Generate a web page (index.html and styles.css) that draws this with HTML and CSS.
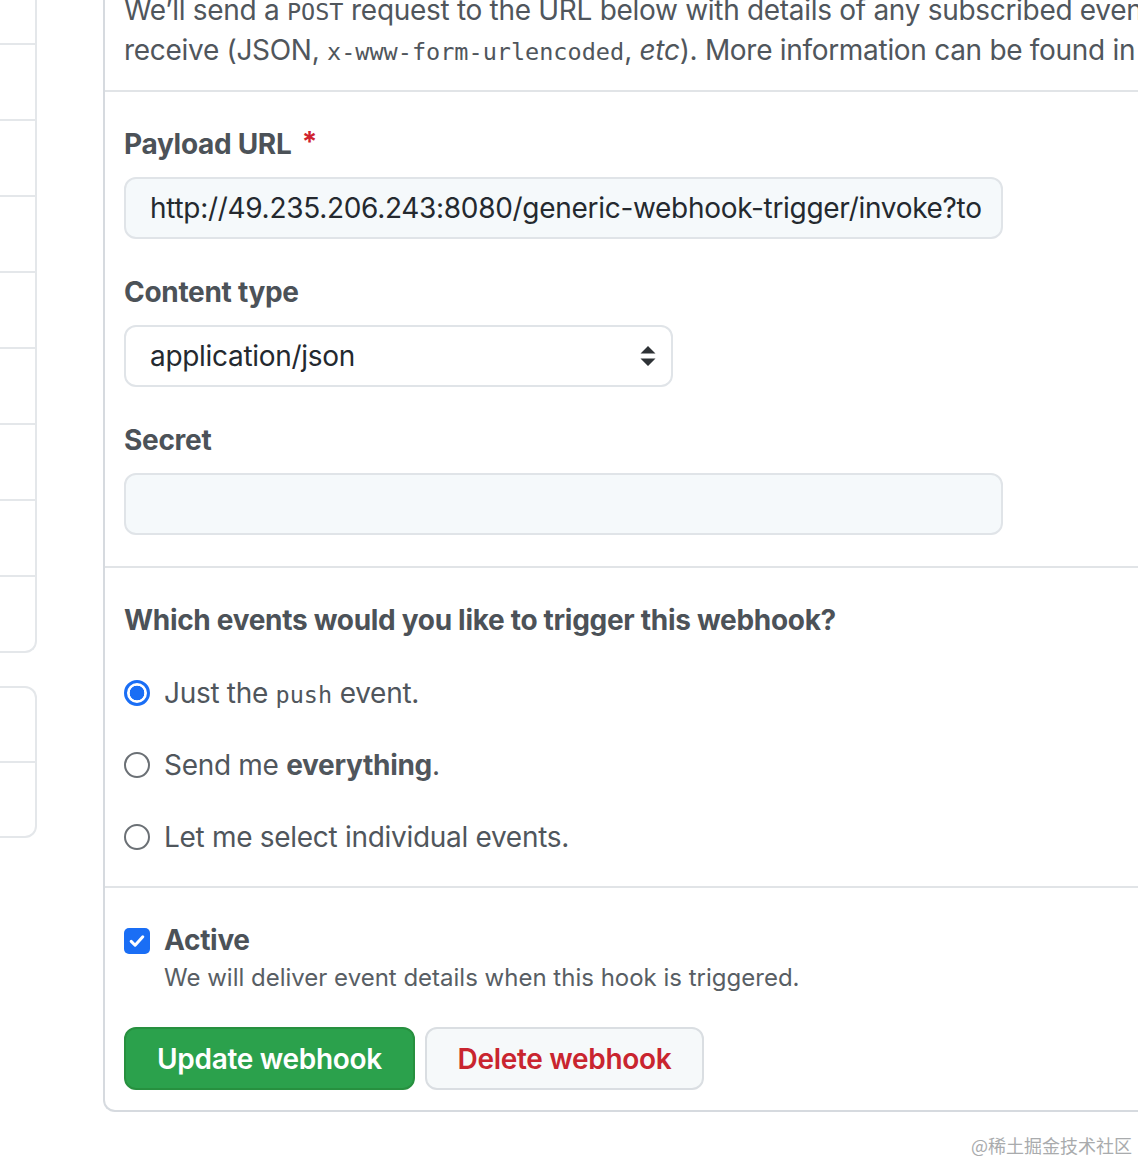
FILE: index.html
```html
<!DOCTYPE html>
<html lang="en">
<head>
<meta charset="utf-8">
<title>Webhooks / Manage webhook</title>
<link rel="stylesheet" href="styles.css">
</head>
<body>
<div class="page">
  <aside class="sidebar">
    <nav class="menu menu-main">
      <div class="menu-item menu-item-partial"></div>
      <div class="menu-item"></div>
      <div class="menu-item"></div>
      <div class="menu-item"></div>
      <div class="menu-item"></div>
      <div class="menu-item"></div>
      <div class="menu-item"></div>
      <div class="menu-item"></div>
      <div class="menu-item"></div>
    </nav>
    <nav class="menu menu-second">
      <div class="menu-item"></div>
      <div class="menu-item"></div>
    </nav>
  </aside>

  <main class="panel">
    <section class="section intro">
      <p class="intro-text">We’ll send a <code>POST</code> request to the URL below with details of any subscribed events. You can also specify which data format you’d like to<br>receive (JSON, <code>x-www-form-urlencoded</code>, <em>etc</em>). More information can be found in our developer documentation.</p>
    </section>

    <section class="section fields">
      <div class="field">
        <label class="label" for="url">Payload URL <span class="required">*</span></label>
        <div class="input input-wide"><span class="input-value">http://49.235.206.243:8080/generic-webhook-trigger/invoke?to</span></div>
      </div>
      <div class="field">
        <label class="label" for="ctype">Content type</label>
        <div class="select">
          <span class="input-value">application/json</span>
          <svg class="select-arrows" width="16" height="22" viewBox="0 0 16 22"><path d="M8 1 L15.5 8.5 H0.5 Z M8 21 L15.5 13.5 H0.5 Z" fill="#2e3236"/></svg>
        </div>
      </div>
      <div class="field">
        <label class="label" for="secret">Secret</label>
        <div class="input input-wide"></div>
      </div>
    </section>

    <section class="section events">
      <h3 class="heading">Which events would you like to trigger this webhook?</h3>
      <div class="option">
        <span class="radio radio-checked"></span>
        <span class="option-text">Just the <code class="code-inline">push</code> event.</span>
      </div>
      <div class="option">
        <span class="radio"></span>
        <span class="option-text">Send me <strong>everything</strong>.</span>
      </div>
      <div class="option">
        <span class="radio"></span>
        <span class="option-text">Let me select individual events.</span>
      </div>
    </section>

    <section class="section active">
      <div class="check-row">
        <span class="checkbox">
          <svg width="18" height="18" viewBox="0 0 18 18"><path d="M3.2 9.4 L7.1 13.2 L14.8 4.8" fill="none" stroke="#fff" stroke-width="3" stroke-linecap="round" stroke-linejoin="round"/></svg>
        </span>
        <div class="check-body">
          <div class="check-label">Active</div>
          <p class="note">We will deliver event details when this hook is triggered.</p>
        </div>
      </div>
      <div class="actions">
        <button class="btn btn-primary" type="button">Update webhook</button>
        <button class="btn btn-danger" type="button">Delete webhook</button>
      </div>
    </section>
  </main>
</div>
<div class="watermark">@稀土掘金技术社区</div>
</body>
</html>
```

FILE: styles.css
```css
html, body {
  margin: 0;
  padding: 0;
  overflow: hidden;
  background: #ffffff;
}

body {
  width: 1138px;
  height: 1164px;
  position: relative;
  font-family: Inter, "Noto Sans", sans-serif;
  color: #50565c;
  letter-spacing: -0.3px;
}

.page {
  display: flex;
  align-items: flex-start;
  width: 1400px;
}

/* sidebar */
.sidebar {
  width: 37px;
  flex: none;
  display: flex;
  flex-direction: column;
}

.menu {
  border: 2px solid #e4e7ea;
  border-left: none;
  box-sizing: border-box;
  width: 37px;
}

.menu-main {
  border-top: none;
  border-bottom-right-radius: 12px;
}

.menu-second {
  margin-top: 33px;
  border-top-right-radius: 12px;
  border-bottom-right-radius: 12px;
}

.menu-item {
  height: 74px;
  border-top: 2px solid #e4e7ea;
}

.menu-second .menu-item {
  height: 73px;
}

.menu-item:first-child {
  border-top: none;
}

.menu-main .menu-item-partial {
  height: 43px;
}

/* panel */
.panel {
  margin-left: 66px;
  width: 1200px;
  flex: none;
  border-left: 2px solid #d6dadf;
  border-bottom: 2px solid #d6dadf;
  border-bottom-left-radius: 12px;
}

.section {
  padding-left: 19px;
  border-top: 2px solid #e1e4e7;
}

.intro {
  border-top: none;
  padding-bottom: 20px;
}

.intro-text {
  margin: -10px 0 0;
  font-size: 28px;
  line-height: 40px;
  white-space: nowrap;
}

.intro-text code {
  font-family: "DejaVu Sans Mono", "Liberation Mono", monospace;
  font-size: 23.5px;
  line-height: 1;
  letter-spacing: 0;
}

.fields {
  padding-top: 32px;
  padding-bottom: 31px;
}

.field + .field {
  margin-top: 33px;
}

.label {
  display: block;
  font-size: 28px;
  line-height: 40px;
  font-weight: 700;
  color: #4c5258;
  margin-bottom: 13px;
}

.required {
  color: #cf222e;
  margin-left: 4px;
  position: relative;
  top: -2px;
}

.input,
.select {
  box-sizing: border-box;
  height: 62px;
  border: 2px solid #e0e4e8;
  border-radius: 12px;
  background: #f5f9fb;
  display: flex;
  align-items: center;
  padding: 0 24px;
}

.input-wide {
  width: 879px;
}

.select {
  width: 549px;
  background: #ffffff;
  justify-content: space-between;
  padding-right: 15px;
}

.input-value {
  font-size: 28px;
  color: #24292f;
  white-space: nowrap;
}

.select-arrows {
  display: block;
}

/* events */
.events {
  padding-top: 32px;
  padding-bottom: 29px;
}

.heading {
  margin: 0 0 33px;
  font-size: 28px;
  line-height: 40px;
  font-weight: 700;
  color: #4c5258;
}

.option {
  display: flex;
  align-items: center;
  gap: 14px;
  height: 40px;
}

.option + .option {
  margin-top: 32px;
}

.option-text {
  font-size: 28px;
  line-height: 40px;
}

.code-inline {
  font-family: "DejaVu Sans Mono", "Liberation Mono", monospace;
  font-size: 23.5px;
  line-height: 1;
  letter-spacing: 0;
}

.radio {
  width: 26px;
  height: 26px;
  box-sizing: border-box;
  border-radius: 50%;
  border: 2px solid #6b7075;
  background: #fff;
  flex: none;
}

.radio-checked {
  border: 3px solid #1a6ef5;
  background: radial-gradient(circle, #1a6ef5 0 7px, #ffffff 7.6px);
}

/* active */
.active {
  padding-top: 32px;
  padding-bottom: 20px;
}

.check-row {
  display: flex;
  gap: 14px;
}

.checkbox {
  width: 26px;
  height: 26px;
  margin-top: 8px;
  border-radius: 5px;
  background: #1a6ef5;
  display: flex;
  align-items: center;
  justify-content: center;
  flex: none;
}

.checkbox svg {
  display: block;
}

.check-label {
  font-size: 28px;
  line-height: 40px;
  font-weight: 700;
  color: #4c5258;
}

.note {
  margin: 0;
  font-size: 24px;
  line-height: 36px;
  color: #585e64;
  letter-spacing: 0;
}

.actions {
  display: flex;
  gap: 10px;
  margin-top: 31px;
}

.btn {
  box-sizing: border-box;
  height: 63px;
  border-radius: 12px;
  font-family: inherit;
  font-size: 28px;
  font-weight: 600;
  letter-spacing: -0.3px;
  padding: 0;
  white-space: nowrap;
  text-align: center;
  cursor: pointer;
}

.btn-primary {
  width: 291px;
  background: #2ba14c;
  border: 2px solid #27903f;
  color: #ffffff;
}

.btn-danger {
  width: 279px;
  background: #f6f9fa;
  border: 2px solid #dadee2;
  color: #c9252f;
}

.watermark {
  position: absolute;
  right: 6px;
  bottom: 6px;
  font-family: "Noto Sans CJK SC", sans-serif;
  font-size: 18px;
  color: #a9abad;
  letter-spacing: 0;
}
```
